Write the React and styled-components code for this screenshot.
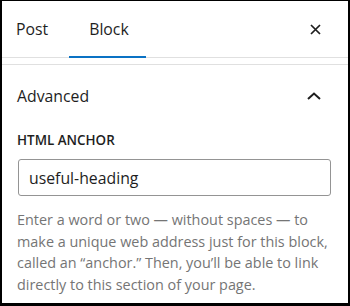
import styled, { createGlobalStyle } from 'styled-components'

const Global = createGlobalStyle`
  html, body { margin: 0; padding: 0; background: #fff; }
  * { box-sizing: border-box; }
`

const Frame = styled.div`
  width: 350px;
  height: 306px;
  overflow: hidden;
  background: #fff;
  border-style: solid;
  border-color: #000;
  border-width: 1px 2px 3px 2px;
  font-family: "Open Sans", "Noto Sans", sans-serif;
  color: #1e1e1e;
`

const Header = styled.div`
  display: flex;
  align-items: stretch;
  height: 57px;
  border-bottom: 1px solid #e0e0e0;
`

const Tab = styled.button`
  position: relative;
  display: flex;
  align-items: center;
  border: 0;
  background: none;
  margin: 0;
  padding: ${p => (p.$first ? '0 21px 0 14px' : '0 17px 0 20px')};
  font-family: inherit;
  font-size: 15.8px;
  color: #1e1e1e;
  cursor: pointer;

  &::after {
    content: '';
    position: absolute;
    left: 0;
    right: 0;
    bottom: -1px;
    height: 2px;
    background: ${p => (p.$active ? '#0a72c4' : 'transparent')};
  }
`

const CloseButton = styled.button`
  margin-left: auto;
  width: 56px;
  display: flex;
  align-items: center;
  justify-content: center;
  border: 0;
  background: none;
  padding: 0 10px 0 0;
  color: #1e1e1e;
`

const Panel = styled.section`
  margin-top: 6px;
  border-top: 1px solid #e0e0e0;
`

const TitleRow = styled.div`
  display: flex;
  align-items: center;
  justify-content: space-between;
  height: 62px;
  padding: 0 27px 0 15px;
`

const Title = styled.h2`
  margin: 0;
  font-size: 15.8px;
  font-weight: 500;
`

const Body = styled.div`
  padding: 0 17px 0 15px;
`

const Label = styled.label`
  display: block;
  margin-top: 4px;
  font-size: 13.4px;
  line-height: 18px;
  font-weight: 600;
  text-transform: uppercase;
`

const Input = styled.input`
  display: block;
  width: calc(100% - 1px);
  margin: 10px 0 0 1px;
  height: 37px;
  padding: 0 10px;
  border: 1px solid #949494;
  border-radius: 3px;
  font-family: inherit;
  font-size: 15.8px;
  color: #1e1e1e;
  outline: none;
`

const Help = styled.p`
  margin: 13px 0 0;
  font-size: 14.4px;
  line-height: 21.5px;
  color: #757575;
`

export default function App() {
  return (
    <>
      <Global />
      <Frame>
        <Header>
          <Tab $first>Post</Tab>
          <Tab $active>Block</Tab>
          <CloseButton aria-label="Close">
            <svg width="11" height="11" viewBox="0 0 11 11">
              <path d="M1 1L10 10M10 1L1 10" stroke="currentColor" strokeWidth="1.7" fill="none" />
            </svg>
          </CloseButton>
        </Header>
        <Panel>
          <TitleRow>
            <Title>Advanced</Title>
            <svg width="14" height="8" viewBox="0 0 14 8">
              <path d="M1 7L7 1.5L13 7" stroke="#1e1e1e" strokeWidth="2" fill="none" />
            </svg>
          </TitleRow>
          <Body>
            <Label htmlFor="anchor">HTML anchor</Label>
            <Input id="anchor" defaultValue="useful-heading" />
            <Help>
              Enter a word or two — without spaces — to make a unique web address just for this
              block, called an “anchor.” Then, you’ll be able to link directly to this section of
              your page.
            </Help>
          </Body>
        </Panel>
      </Frame>
    </>
  )
}
